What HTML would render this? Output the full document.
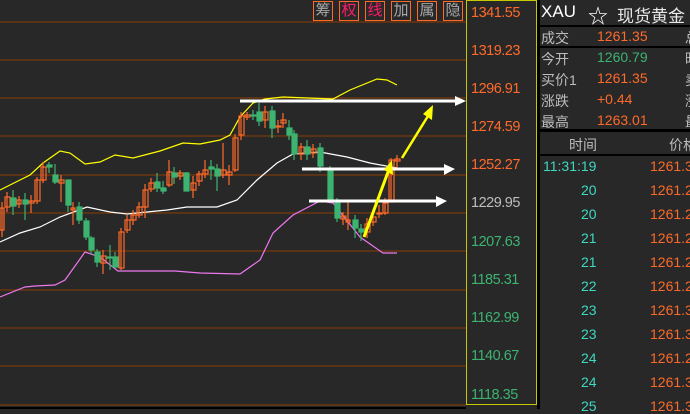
<!DOCTYPE html>
<html><head><meta charset="utf-8"><style>
*{margin:0;padding:0;box-sizing:border-box}
body{width:690px;height:409px;background:#282828;overflow:hidden;position:relative;font-family:"Liberation Sans","Noto Sans CJK SC",sans-serif}
.ax{position:absolute;left:466px;top:0;width:71px;height:405px;border:1px solid #c8c800;background:#282828}
.ax div{position:absolute;left:4px;font-size:14.5px;letter-spacing:-0.5px}
.rp{position:absolute;left:537px;top:0;width:153px;height:409px;background:#000}
.box{position:absolute;left:3px;right:0;background:#282828}
.t{position:absolute;font-size:14px;white-space:nowrap}
.g{color:#bdbdbd}.o{color:#ff6a2a}.gr{color:#3cb371}.c{color:#3fd8c0}
.btn{position:absolute;top:1px;width:20px;height:20px;border:1.5px solid #ff6a2a;font-size:15px;line-height:17px;text-align:center;color:#a8a8a8}
</style></head><body>
<svg width="466" height="409" style="position:absolute;left:0;top:0">
<g stroke="#6b3510" stroke-width="1.5">
<line x1="0" y1="22" x2="466" y2="22"/><line x1="0" y1="60" x2="466" y2="60"/><line x1="0" y1="98" x2="466" y2="98"/><line x1="0" y1="136" x2="466" y2="136"/><line x1="0" y1="175" x2="466" y2="175"/><line x1="0" y1="213" x2="466" y2="213"/><line x1="0" y1="251" x2="466" y2="251"/><line x1="0" y1="290" x2="466" y2="290"/><line x1="0" y1="328" x2="466" y2="328"/><line x1="0" y1="366" x2="466" y2="366"/><line x1="0" y1="405" x2="466" y2="405"/>
</g>
<rect x="0" y="407" width="466" height="2" fill="#000"/>
<polyline fill="none" stroke="#ffff00" stroke-width="1.2" points="0,190 30,175 43,163 60,151 70,153 85,164 100,162 115,155 133,158 160,151 183,143 200,144 220,140 230,135 240,117 253,103 265,99 283,97 333,99 350,90 377,79 387,80 397,85"/>
<polyline fill="none" stroke="#ffffff" stroke-width="1.2" points="0,242 20,233 40,227 60,217 87,207 110,212 127,214 167,210 187,207 217,207 237,200 257,180 277,163 293,154 320,152 347,157 370,163 397,168"/>
<polyline fill="none" stroke="#ee77ee" stroke-width="1.2" points="0,297 25,287 35,286 55,285 65,280 85,252 100,257 118,271 175,271 200,273 240,274 260,260 273,233 293,215 320,201 333,203 360,237 383,253 397,253"/>
<g stroke-width="1.2">
<g stroke="#ff6a2a" fill="none">
<line x1="2" y1="202" x2="2" y2="237"/><rect x="0" y="208" width="4" height="22"/>
<line x1="7" y1="192" x2="7" y2="212"/><rect x="5" y="197" width="5" height="10"/>
<line x1="19" y1="196" x2="19" y2="208"/><rect x="17" y="200" width="4" height="4"/>
<line x1="31" y1="195" x2="31" y2="213"/><rect x="29" y="201" width="5" height="2"/>
<line x1="37" y1="177" x2="37" y2="204"/><rect x="35" y="180" width="5" height="21"/>
<line x1="43" y1="162" x2="43" y2="183"/><rect x="41" y="167" width="5" height="13"/>
<line x1="61" y1="175" x2="61" y2="202"/><rect x="59" y="180" width="5" height="3"/>
<line x1="73" y1="202" x2="73" y2="225"/><rect x="71" y="208" width="4" height="2"/>
<line x1="103" y1="250" x2="103" y2="274"/><rect x="101" y="256" width="5" height="7"/>
<line x1="121" y1="228" x2="121" y2="270"/><rect x="119" y="232" width="5" height="36"/>
<line x1="127" y1="215" x2="127" y2="233"/><rect x="125" y="220" width="5" height="10"/>
<line x1="133" y1="210" x2="133" y2="225"/><rect x="131" y="215" width="5" height="5"/>
<line x1="139" y1="202" x2="139" y2="218"/><rect x="137" y="207" width="5" height="8"/>
<line x1="145" y1="184" x2="145" y2="218"/><rect x="143" y="190" width="5" height="17"/>
<line x1="151" y1="178" x2="151" y2="192"/><rect x="149" y="183" width="5" height="6"/>
<line x1="169" y1="160" x2="169" y2="187"/><rect x="167" y="172" width="5" height="13"/>
<line x1="180" y1="170" x2="180" y2="180"/><rect x="178" y="173" width="5" height="3"/>
<line x1="193" y1="176" x2="193" y2="198"/><rect x="191" y="183" width="5" height="7"/>
<line x1="199" y1="171" x2="199" y2="186"/><rect x="197" y="174" width="5" height="7"/>
<line x1="205" y1="160" x2="205" y2="178"/><rect x="203" y="170" width="5" height="4"/>
<line x1="223" y1="143" x2="223" y2="178"/><rect x="221" y="170" width="5" height="5"/>
<line x1="229" y1="165" x2="229" y2="185"/><rect x="227" y="172" width="5" height="3"/>
<line x1="235" y1="134" x2="235" y2="172"/><rect x="233" y="138" width="5" height="32"/>
<line x1="241" y1="112" x2="241" y2="140"/><rect x="239" y="116" width="5" height="19"/>
<line x1="247" y1="112" x2="247" y2="120"/><rect x="245" y="115" width="5" height="2"/>
<line x1="265" y1="106" x2="265" y2="128"/><rect x="263" y="112" width="5" height="8"/>
<line x1="278" y1="120" x2="278" y2="133"/><rect x="276" y="126" width="5" height="1"/>
<line x1="283" y1="113" x2="283" y2="128"/><rect x="281" y="120" width="5" height="3"/>
<line x1="301" y1="143" x2="301" y2="160"/><rect x="299" y="147" width="5" height="7"/>
<line x1="313" y1="144" x2="313" y2="158"/><rect x="311" y="149" width="5" height="4"/>
<line x1="343" y1="212" x2="343" y2="225"/><rect x="341" y="216" width="5" height="3"/>
<line x1="348" y1="202" x2="348" y2="230"/><rect x="346" y="220" width="4" height="2"/>
<line x1="367" y1="218" x2="367" y2="238"/><rect x="365" y="224" width="5" height="8"/>
<line x1="373" y1="210" x2="373" y2="226"/><rect x="371" y="217" width="5" height="5"/>
<line x1="379" y1="205" x2="379" y2="218"/><rect x="377" y="213" width="5" height="1"/>
<line x1="385" y1="198" x2="385" y2="215"/><rect x="383" y="203" width="5" height="10"/>
<line x1="391" y1="158" x2="391" y2="202"/><rect x="389" y="160" width="5" height="42"/>
<line x1="397" y1="155" x2="397" y2="170"/><rect x="395" y="159" width="5" height="2"/>
</g>
<g stroke="#3cb371" fill="#3cb371">
<line x1="13" y1="190" x2="13" y2="215"/><rect x="11" y="198" width="5" height="8"/>
<line x1="25" y1="193" x2="25" y2="220"/><rect x="23" y="200" width="5" height="4"/>
<line x1="49" y1="162" x2="49" y2="173"/><rect x="47" y="165" width="5" height="2"/>
<line x1="55" y1="164" x2="55" y2="184"/><rect x="53" y="175" width="5" height="7"/>
<line x1="68" y1="180" x2="68" y2="212"/><rect x="66" y="180" width="5" height="25"/>
<line x1="79" y1="202" x2="79" y2="224"/><rect x="77" y="207" width="5" height="13"/>
<line x1="86" y1="218" x2="86" y2="240"/><rect x="84" y="221" width="5" height="16"/>
<line x1="91" y1="236" x2="91" y2="254"/><rect x="89" y="238" width="5" height="12"/>
<line x1="97" y1="249" x2="97" y2="267"/><rect x="95" y="252" width="5" height="10"/>
<line x1="110" y1="245" x2="110" y2="270"/><rect x="107" y="257" width="5" height="1"/>
<line x1="115" y1="252" x2="115" y2="268"/><rect x="113" y="257" width="5" height="10"/>
<line x1="157" y1="173" x2="157" y2="192"/><rect x="155" y="182" width="5" height="6"/>
<line x1="163" y1="181" x2="163" y2="194"/><rect x="161" y="188" width="5" height="3"/>
<line x1="174" y1="167" x2="174" y2="184"/><rect x="172" y="173" width="5" height="4"/>
<line x1="186" y1="172" x2="186" y2="191"/><rect x="184" y="173" width="5" height="18"/>
<line x1="211" y1="160" x2="211" y2="180"/><rect x="209" y="167" width="5" height="2"/>
<line x1="217" y1="164" x2="217" y2="191"/><rect x="215" y="169" width="5" height="7"/>
<line x1="253" y1="110" x2="253" y2="120"/><rect x="251" y="115" width="5" height="1"/>
<line x1="259" y1="103" x2="259" y2="126"/><rect x="257" y="112" width="5" height="9"/>
<line x1="272" y1="106" x2="272" y2="138"/><rect x="270" y="111" width="5" height="17"/>
<line x1="289" y1="120" x2="289" y2="140"/><rect x="287" y="128" width="5" height="7"/>
<line x1="294" y1="130" x2="294" y2="160"/><rect x="292" y="134" width="5" height="20"/>
<line x1="307" y1="140" x2="307" y2="160"/><rect x="305" y="147" width="5" height="7"/>
<line x1="320" y1="143" x2="320" y2="172"/><rect x="318" y="148" width="5" height="18"/>
<line x1="330" y1="166" x2="330" y2="202"/><rect x="328" y="169" width="5" height="31"/>
<line x1="337" y1="198" x2="337" y2="222"/><rect x="335" y="200" width="5" height="18"/>
<line x1="355" y1="215" x2="355" y2="238"/><rect x="353" y="220" width="5" height="8"/>
<line x1="361" y1="224" x2="361" y2="241"/><rect x="359" y="229" width="5" height="3"/>
</g>
</g>
<g fill="#fff" stroke="#fff">
<line x1="240" y1="101" x2="456" y2="101" stroke-width="3"/><polygon points="455,96 466,101 455,106" stroke="none"/>
<line x1="302" y1="169" x2="445" y2="169" stroke-width="3"/><polygon points="444,164 455,169 444,175" stroke="none"/>
<line x1="309" y1="201" x2="437" y2="201" stroke-width="3"/><polygon points="436,196 447,201 436,207" stroke="none"/>
</g>
<g fill="#ffff00" stroke="#ffff00">
<line x1="364" y1="237" x2="388" y2="172" stroke-width="3"/><polygon points="384,170 392,160 393,175" stroke="none"/>
<line x1="402" y1="158" x2="428" y2="116" stroke-width="2.5"/><polygon points="423,114 433,105 432,120" stroke="none"/>
</g>
</svg>
<div class="btn" style="left:313px">筹</div>
<div class="btn" style="left:339px;color:#ff1a6a">权</div>
<div class="btn" style="left:365px;color:#ff1a6a">线</div>
<div class="btn" style="left:391px">加</div>
<div class="btn" style="left:417px">属</div>
<div class="btn" style="left:443px">隐</div>
<div class="ax">
<div class="o" style="top:4px">1341.55</div>
<div class="o" style="top:42px">1319.23</div>
<div class="o" style="top:80px">1296.91</div>
<div class="o" style="top:118px">1274.59</div>
<div class="o" style="top:156px">1252.27</div>
<div class="g" style="top:194px">1229.95</div>
<div class="gr" style="top:233px">1207.63</div>
<div class="gr" style="top:271px">1185.31</div>
<div class="gr" style="top:309px">1162.99</div>
<div class="gr" style="top:347px">1140.67</div>
<div class="gr" style="top:386px">1118.35</div>
</div>
<div class="rp">
<div class="box" style="top:0;height:25px"></div>
<div class="box" style="top:27px;height:19px"></div>
<div class="box" style="top:48px;height:81px"></div>
<div class="box" style="top:132px;height:22px"></div>
<div class="box" style="top:156px;height:253px"></div>
<div class="t" style="left:4px;top:2px;font-size:17px;color:#fff">XAU</div>
<div class="t" style="left:51px;top:0px;font-size:20px;color:#fff">☆</div>
<div class="t" style="left:80px;top:2px;font-size:17px;color:#e8e8e8">现货黄金 ●</div>
<div class="t g" style="left:4px;top:28px">成交</div><div class="t o" style="left:60px;top:28px">1261.35</div><div class="t g" style="left:148px;top:28px">总</div>
<div class="t g" style="left:4px;top:49px">今开</div><div class="t gr" style="left:60px;top:49px">1260.79</div><div class="t g" style="left:148px;top:49px">昨</div>
<div class="t g" style="left:4px;top:70px">买价1</div><div class="t o" style="left:60px;top:70px">1261.35</div><div class="t g" style="left:148px;top:70px">卖</div>
<div class="t g" style="left:4px;top:91px">涨跌</div><div class="t o" style="left:60px;top:91px">+0.44</div><div class="t g" style="left:148px;top:91px">涨</div>
<div class="t g" style="left:4px;top:112px">最高</div><div class="t o" style="left:60px;top:112px">1263.01</div><div class="t g" style="left:148px;top:112px">最</div>
<div class="t g" style="left:32px;top:135px">时间</div><div class="t g" style="left:132px;top:135px">价格</div>
<div class="t c" style="left:6px;top:158px">11:31:19</div><div class="t o" style="left:113px;top:158px">1261.35</div>
<div class="t c" style="left:44px;top:182px">20</div><div class="t o" style="left:113px;top:182px">1261.25</div>
<div class="t c" style="left:44px;top:206px">20</div><div class="t o" style="left:113px;top:206px">1261.25</div>
<div class="t c" style="left:44px;top:230px">21</div><div class="t o" style="left:113px;top:230px">1261.25</div>
<div class="t c" style="left:44px;top:254px">21</div><div class="t o" style="left:113px;top:254px">1261.25</div>
<div class="t c" style="left:44px;top:278px">22</div><div class="t o" style="left:113px;top:278px">1261.25</div>
<div class="t c" style="left:44px;top:302px">23</div><div class="t o" style="left:113px;top:302px">1261.35</div>
<div class="t c" style="left:44px;top:326px">23</div><div class="t o" style="left:113px;top:326px">1261.35</div>
<div class="t c" style="left:44px;top:350px">24</div><div class="t o" style="left:113px;top:350px">1261.25</div>
<div class="t c" style="left:44px;top:374px">24</div><div class="t o" style="left:113px;top:374px">1261.35</div>
<div class="t c" style="left:44px;top:398px">25</div><div class="t o" style="left:113px;top:398px">1261.35</div>
</div>
</body></html>
